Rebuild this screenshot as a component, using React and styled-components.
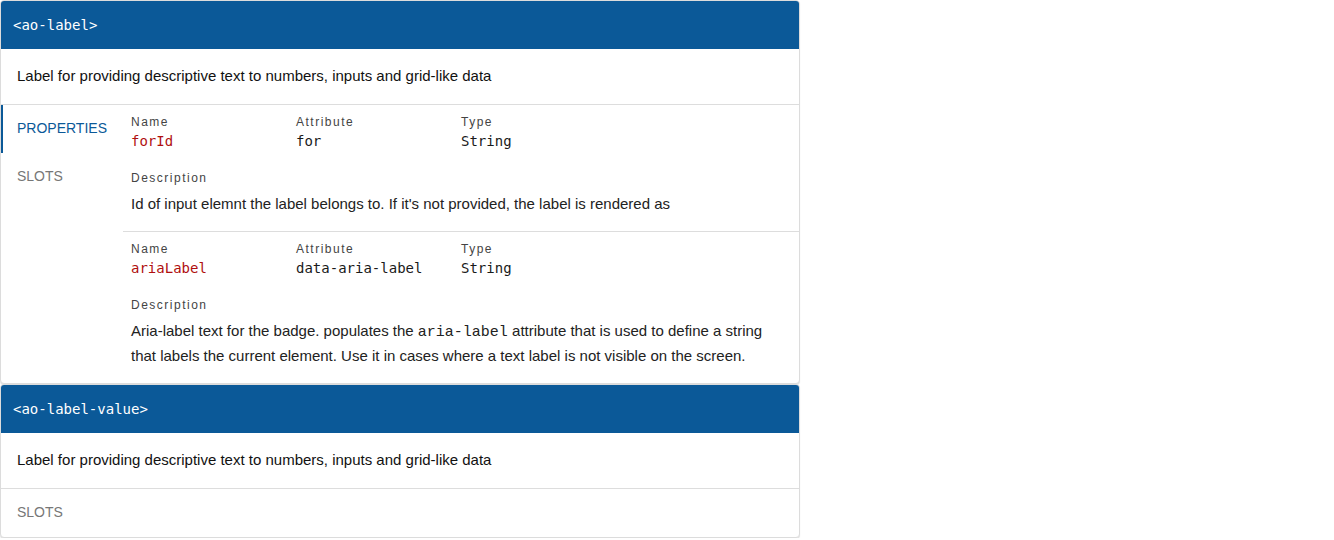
import React from 'react'
import styled, { createGlobalStyle } from 'styled-components'

const GlobalStyle = createGlobalStyle`
    *, *::before, *::after {
        box-sizing: border-box;
    }
    body {
        margin: 0;
        background: #fff;
        font-family: "Liberation Sans", Arial, sans-serif;
    }
`

const components = [
    {
        tag: 'ao-label',
        description: 'Label for providing descriptive text to numbers, inputs and grid-like data',
        tabs: ['PROPERTIES', 'SLOTS'],
        properties: [
            {
                name: 'forId',
                attribute: 'for',
                type: 'String',
                description: <>Id of input elemnt the label belongs to. If it's not provided, the label is rendered as</>,
            },
            {
                name: 'ariaLabel',
                attribute: 'data-aria-label',
                type: 'String',
                description: (
                    <>
                        Aria-label text for the badge. populates the <code>aria-label</code> attribute that is used to
                        define a string that labels the current element. Use it in cases where a text label is not
                        visible on the screen.
                    </>
                ),
            },
        ],
    },
    {
        tag: 'ao-label-value',
        description: 'Label for providing descriptive text to numbers, inputs and grid-like data',
        tabs: ['SLOTS'],
        properties: [],
    },
]

function PropertyItem({ prop }) {
    return (
        <PropStyled>
            <div className="grid">
                <span className="label">Name</span>
                <span className="label">Attribute</span>
                <span className="label">Type</span>
                <span className="value name">{prop.name}</span>
                <span className="value">{prop.attribute}</span>
                <span className="value">{prop.type}</span>
            </div>
            <span className="label desc-label">Description</span>
            <p>{prop.description}</p>
        </PropStyled>
    )
}

function ComponentCard({ data }) {
    const hasProps = data.properties.length > 0
    return (
        <CardStyled>
            <Header>&lt;{data.tag}&gt;</Header>
            <Summary>{data.description}</Summary>
            <Body>
                <Tabs>
                    {data.tabs.map((t, i) => (
                        <Tab key={t} $active={hasProps && i === 0}>{t}</Tab>
                    ))}
                </Tabs>
                <PropList>
                    {data.properties.map((p) => (
                        <PropertyItem key={p.name} prop={p} />
                    ))}
                </PropList>
            </Body>
        </CardStyled>
    )
}

export default function App() {
    return (
        <>
            <GlobalStyle />
            <Page>
                {components.map((c) => (
                    <ComponentCard key={c.tag} data={c} />
                ))}
            </Page>
        </>
    )
}

const Page = styled.div`
    width: 800px;
    display: flex;
    flex-direction: column;
`

const CardStyled = styled.section`
    border: 1px solid #dcdcdc;
    border-radius: 4px;
    background: #fff;
    overflow: hidden;
    box-shadow: 0 1px 1px rgba(0, 0, 0, 0.12);
`

const Header = styled.header`
    height: 48px;
    background-color: #0b5998;
    color: #fff;
    font-family: "DejaVu Sans Mono", monospace;
    font-size: 14px;
    display: flex;
    align-items: center;
    padding: 0 12px;
`

const Summary = styled.div`
    padding: 16px 16px 17px;
    font-size: 15px;
    line-height: 22px;
    color: #111;
    border-bottom: 1px solid #dddddd;
`

const Body = styled.div`
    display: flex;
`

const Tabs = styled.nav`
    width: 122px;
    flex-shrink: 0;
    display: flex;
    flex-direction: column;
`

const Tab = styled.div`
    height: 48px;
    display: flex;
    align-items: center;
    padding-left: 14px;
    padding-bottom: 2px;
    font-size: 14px;
    border-left: 2px solid ${(p) => (p.$active ? '#0b5998' : 'transparent')};
    color: ${(p) => (p.$active ? '#0b5998' : '#777')};
`

const PropList = styled.div`
    flex: 1;
    display: flex;
    flex-direction: column;
`

const PropStyled = styled.div`
    padding: 9px 8px 15px;
    & + & {
        border-top: 1px solid #dddddd;
    }
    .grid {
        display: grid;
        grid-template-columns: 165px 165px 165px;
        row-gap: 1px;
    }
    .label {
        font-family: "Liberation Sans", Arial, sans-serif;
        font-size: 12px;
        line-height: 16px;
        letter-spacing: 1.5px;
        color: #444;
    }
    .value {
        font-family: "DejaVu Sans Mono", monospace;
        font-size: 14px;
        line-height: 20px;
        color: #1a1a1a;
    }
    .name {
        color: #b00f0f;
    }
    .desc-label {
        display: block;
        margin-top: 19px;
    }
    p {
        margin: 5px 0 0;
        font-size: 15px;
        line-height: 25px;
        color: #222;
        code {
            font-family: "Liberation Mono", monospace;
            font-size: 15px;
            line-height: 1;
        }
    }
`
